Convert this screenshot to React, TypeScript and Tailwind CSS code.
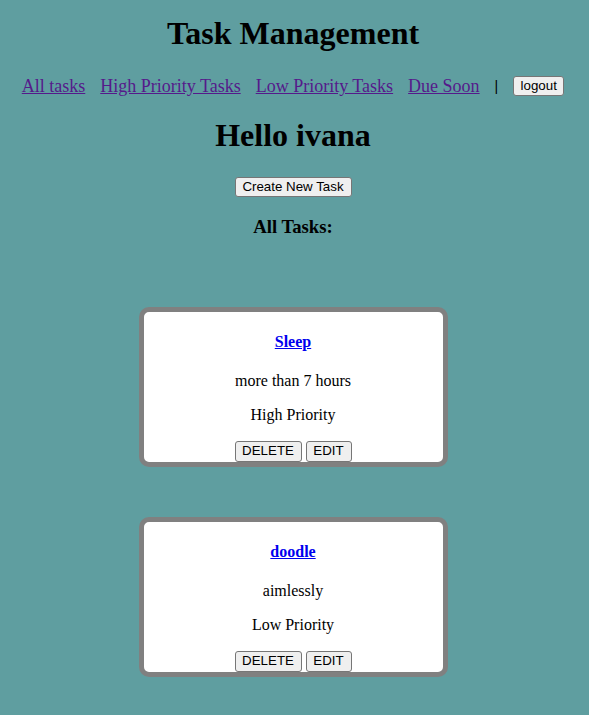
import React from "react";

const serif = "font-['Liberation_Serif','Times_New_Roman',serif]";
const btn =
  "h-[20px] px-[6px] bg-[#efefef] border border-[#767676] rounded-[3px] text-[13.33px] leading-[16px] text-black font-['Liberation_Sans',Arial,sans-serif] flex items-center justify-center";

function TaskCard({ title, desc, priority }: { title: string; desc: string; priority: string }) {
  return (
    <div className="w-[309px] h-[160px] border-[5px] border-[#808080] rounded-[10px] bg-white flex flex-col items-center">
      <a href="#" className="mt-[21px] text-[16px] leading-[18px] font-bold text-[#0000ee] underline">
        {title}
      </a>
      <p className="mt-[21px] text-[16px] leading-[18px]">{desc}</p>
      <p className="mt-[16px] text-[16px] leading-[18px]">{priority}</p>
      <div className="mt-[17px] flex gap-[4px]">
        <button className={`${btn} h-[21px] w-[67px]`}>DELETE</button>
        <button className={`${btn} h-[21px] w-[46px]`}>EDIT</button>
      </div>
    </div>
  );
}

export default function App() {
  return (
    <div className={`min-h-[715px] w-full bg-[#5f9ea0] text-black ${serif} flex flex-col items-center pr-[3px] pt-[15px]`}>
      <h1 className="text-[32px] leading-[37px] font-bold">Task Management</h1>
      <nav className="mt-[24px] h-[20px] flex items-center gap-[15px] text-[18px] leading-[20px]">
        <a href="#" className="text-[#551a8b] underline">All tasks</a>
        <a href="#" className="text-[#551a8b] underline">High Priority Tasks</a>
        <a href="#" className="text-[#551a8b] underline">Low Priority Tasks</a>
        <a href="#" className="text-[#551a8b] underline">Due Soon</a>
        <span className="text-[14px] leading-[14px] font-['Liberation_Sans',Arial,sans-serif]">|</span>
        <button className={`${btn} w-[51px]`}>logout</button>
      </nav>
      <h1 className="mt-[21px] text-[32px] leading-[37px] font-bold">Hello ivana</h1>
      <button className={`${btn} mt-[23px] w-[117px]`}>Create New Task</button>
      <h3 className="mt-[19px] text-[18.72px] leading-[21.5px] font-bold">All Tasks:</h3>
      <div className="mt-[69px] flex flex-col gap-[50px]">
        <TaskCard title="Sleep" desc="more than 7 hours" priority="High Priority" />
        <TaskCard title="doodle" desc="aimlessly" priority="Low Priority" />
      </div>
    </div>
  );
}
